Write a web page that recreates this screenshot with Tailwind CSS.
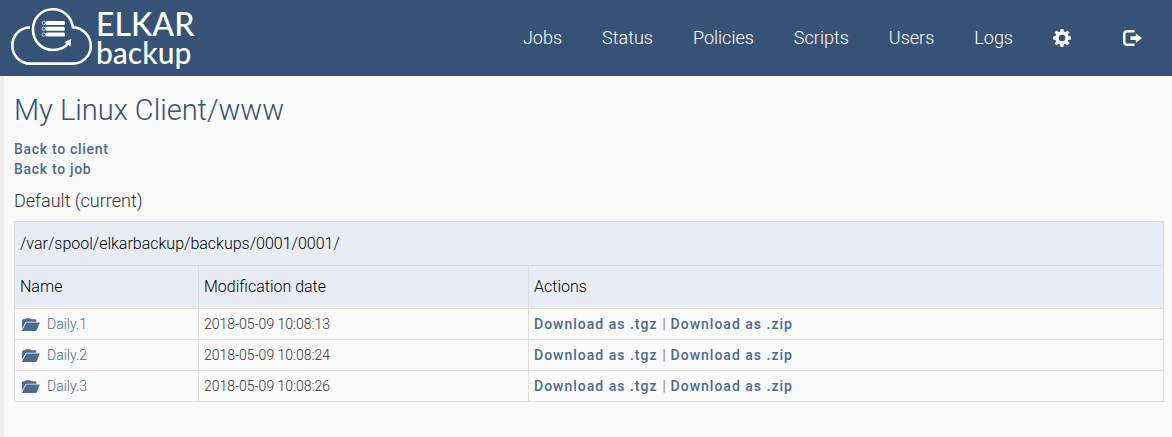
<!DOCTYPE html>
<html lang="en">
<head>
<meta charset="utf-8">
<title>ElkarBackup</title>
<meta name="viewport" content="width=device-width, initial-scale=1">
<script src="https://cdn.jsdelivr.net/npm/@tailwindcss/browser@4"></script>
</head>
<body class="flex min-h-screen flex-col bg-[#fafafa] font-['Roboto',sans-serif] text-sm font-light text-[#333333]">
<svg class="hidden" aria-hidden="true">
  <symbol id="folder" viewBox="0 0 18 13">
    <path d="M0 11V2.2L1 1.200H3L4 .3H8L9 1.300H13.600L14.400 2.200V3.800H4.400L3.400 4.600Z"/>
    <path d="M4.400 4.600H17.800L14.600 12.400Q14.400 13 13.800 13H0V12.400Z"/>
  </symbol>
</svg>
<header class="flex h-19 items-center justify-between bg-[#365277] pr-[30px] pl-[10px] text-white">
  <a href="#" aria-label="ELKAR backup" class="flex items-center gap-[2px]">
    <svg class="h-[66px] w-[84px]" viewBox="0 0 84 66" fill="none" stroke="#fff" stroke-width="2.6" aria-hidden="true">
      <path d="M20 22.5C9.500 22.500 2.300 31 2.300 40.500C2.300 51 10.500 58.600 20 58.600H62.500C73 58.600 80.800 50.500 80.800 41C80.800 30.500 72.500 23 63 22.300C61.300 11.500 53 4.300 43 4.300C31.500 4.300 23 13 23 24.500C23 36.500 32 45 43 45C50 45 55.500 42 59 37.500"/>
      <path d="M61.200 34L60.500 41.500L54.300 37Z" fill="#fff" stroke="none"/>
      <g fill="#fff" stroke="none">
        <rect x="35.500" y="16" width="19.500" height="4" rx="1.500"/>
        <rect x="35.500" y="21.800" width="19.500" height="4" rx="1.500"/>
        <rect x="35.500" y="27.600" width="19.500" height="4" rx="1.500"/>
      </g>
      <g stroke-width="1" opacity=".75">
        <circle cx="33.700" cy="18" r="1.700"/><circle cx="33.700" cy="23.800" r="1.700"/><circle cx="33.700" cy="29.600" r="1.700"/>
      </g>
    </svg>
    <span class="flex flex-col font-['Lato',sans-serif] font-medium">
      <span class="text-[32px] leading-7">ELKAR</span>
      <span class="text-[30px] leading-7">backup</span>
    </span>
  </a>
  <nav class="flex items-center gap-10 text-lg">
    <a href="#">Jobs</a>
    <a href="#">Status</a>
    <a href="#">Policies</a>
    <a href="#">Scripts</a>
    <a href="#">Users</a>
    <a href="#">Logs</a>
    <a href="#" aria-label="Settings" class="mr-[11px]">
      <svg class="size-[18px]" viewBox="0 0 18 18" fill="#fff" fill-rule="evenodd" aria-hidden="true">
        <path d="M7.600 0H10.400L11 2.600L12.300 3.200L14.400 1.500L16.500 3.600L14.800 5.700L15.400 7L18 7.600V10.400L15.400 11L14.800 12.300L16.500 14.400L14.400 16.500L12.300 14.800L11 15.400L10.400 18H7.600L7 15.400L5.700 14.800L3.600 16.500L1.500 14.400L3.200 12.300L2.600 11L0 10.400V7.600L2.600 7L3.200 5.700L1.500 3.600L3.600 1.500L5.700 3.200L7 2.600ZM9 5.700A3.300 3.300 0 1 0 9 12.300A3.300 3.300 0 1 0 9 5.700Z"/>
      </svg>
    </a>
    <a href="#" aria-label="Log out">
      <svg class="h-[18px] w-5" viewBox="0 0 20 18" fill="none" aria-hidden="true">
        <path d="M12.500 2.200H5.500Q2.300 2.200 2.300 5V13Q2.300 15.800 5.500 15.800H12.500" stroke="#fff" stroke-width="2.500"/>
        <path d="M8.500 7.300H13.800V4.500L20 9L13.800 13.800V11H8.500Z" fill="#fff"/>
      </svg>
    </a>
  </nav>
</header>
<main class="flex-1 border-l-4 border-[#eeeeee] pt-[18px] pr-2 pl-[10px]">
  <h1 class="text-[29px] leading-[33px] text-[#365277]">My Linux Client/www</h1>
  <div class="mt-3 flex flex-col items-start font-medium leading-5 tracking-wider text-[#4b6c8f]">
    <a href="#">Back to client</a>
    <a href="#">Back to job</a>
  </div>
  <h2 class="mt-3 text-lg leading-5">Default (current)</h2>
  <table class="mt-[10px] w-full table-fixed border-collapse text-left leading-5 [&_td]:border [&_td]:border-[#dddddd] [&_td]:px-[5px] [&_td]:py-[5px] [&_th]:border [&_th]:border-[#dddddd] [&_th]:px-[5px] [&_th]:font-light">
    <colgroup><col class="w-[184px]"><col class="w-[330px]"><col></colgroup>
    <thead class="bg-[#e8edf5] text-base text-black">
      <tr class="h-11"><th colspan="3">/var/spool/elkarbackup/backups/0001/0001/</th></tr>
      <tr class="h-[43px]"><th scope="col">Name</th><th scope="col">Modification date</th><th scope="col">Actions</th></tr>
    </thead>
    <tbody>
      <tr>
        <td><a href="#" class="flex items-center gap-[7px] pl-0.5 text-[#4b6c8f]"><svg class="h-[13px] w-[18px]" fill="currentColor" aria-hidden="true"><use href="#folder"/></svg>Daily.1</a></td>
        <td>2018-05-09 10:08:13</td>
        <td><a href="#" class="font-medium tracking-[1px] text-[#4b6c8f]">Download as .tgz</a><span class="px-[5px] text-[#7a2b4c]">|</span><a href="#" class="font-medium tracking-[1px] text-[#4b6c8f]">Download as .zip</a></td>
      </tr>
      <tr>
        <td><a href="#" class="flex items-center gap-[7px] pl-0.5 text-[#4b6c8f]"><svg class="h-[13px] w-[18px]" fill="currentColor" aria-hidden="true"><use href="#folder"/></svg>Daily.2</a></td>
        <td>2018-05-09 10:08:24</td>
        <td><a href="#" class="font-medium tracking-[1px] text-[#4b6c8f]">Download as .tgz</a><span class="px-[5px] text-[#7a2b4c]">|</span><a href="#" class="font-medium tracking-[1px] text-[#4b6c8f]">Download as .zip</a></td>
      </tr>
      <tr>
        <td><a href="#" class="flex items-center gap-[7px] pl-0.5 text-[#4b6c8f]"><svg class="h-[13px] w-[18px]" fill="currentColor" aria-hidden="true"><use href="#folder"/></svg>Daily.3</a></td>
        <td>2018-05-09 10:08:26</td>
        <td><a href="#" class="font-medium tracking-[1px] text-[#4b6c8f]">Download as .tgz</a><span class="px-[5px] text-[#7a2b4c]">|</span><a href="#" class="font-medium tracking-[1px] text-[#4b6c8f]">Download as .zip</a></td>
      </tr>
    </tbody>
  </table>
</main>
</body>
</html>
